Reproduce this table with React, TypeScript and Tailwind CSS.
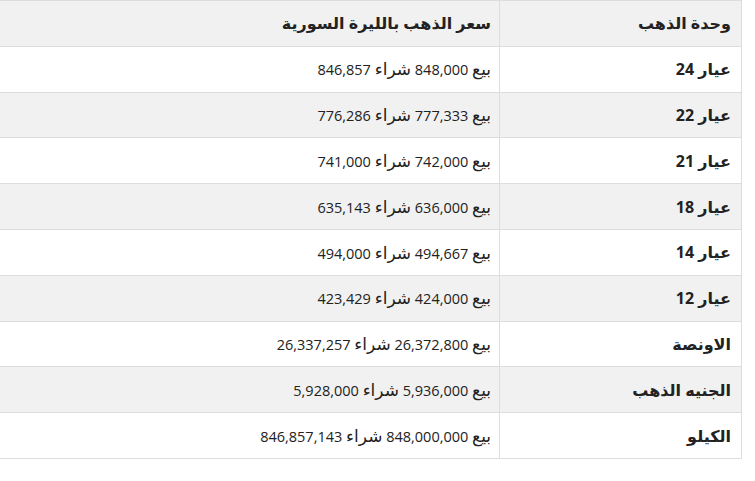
const rows: [string, string, string][] = [
  ["عيار 24", "848,000", "846,857"],
  ["عيار 22", "777,333", "776,286"],
  ["عيار 21", "742,000", "741,000"],
  ["عيار 18", "636,000", "635,143"],
  ["عيار 14", "494,667", "494,000"],
  ["عيار 12", "424,000", "423,429"],
  ["الاونصة", "26,372,800", "26,337,257"],
  ["الجنيه الذهب", "5,936,000", "5,928,000"],
  ["الكيلو", "848,000,000", "846,857,143"],
];

export default function App() {
  return (
    <div
      className="w-[755px] h-[481px] bg-white overflow-hidden"
      style={{ fontFamily: '"Open Sans", "DejaVu Sans", sans-serif' }}
    >
      <table dir="rtl" className="w-[742px] border-collapse text-[14.5px] text-[#222]">
        <thead>
          <tr className="bg-[#f1f1f1] h-[45.8px]">
            <th className="w-[242px] border border-[#dddddd] pr-[10px] text-right text-[16px] font-bold">وحدة الذهب</th>
            <th className="border border-[#dddddd] border-l-0 pr-[8px] text-right text-[16px] font-bold">سعر الذهب بالليرة السورية</th>
          </tr>
        </thead>
        <tbody>
          {rows.map(([name, sell, buy], i) => (
            <tr key={name} className={`h-[45.8px] ${i % 2 === 1 ? "bg-[#f1f1f1]" : "bg-white"}`}>
              <td className="border border-[#dddddd] pr-[10px] text-right text-[16px] font-bold">{name}</td>
              <td className="border border-[#dddddd] border-l-0 pr-[8px] text-right">
                <span className="text-[17px]">بيع</span> {sell} <span className="text-[17px]">شراء</span> {buy}
              </td>
            </tr>
          ))}
        </tbody>
      </table>
    </div>
  );
}
